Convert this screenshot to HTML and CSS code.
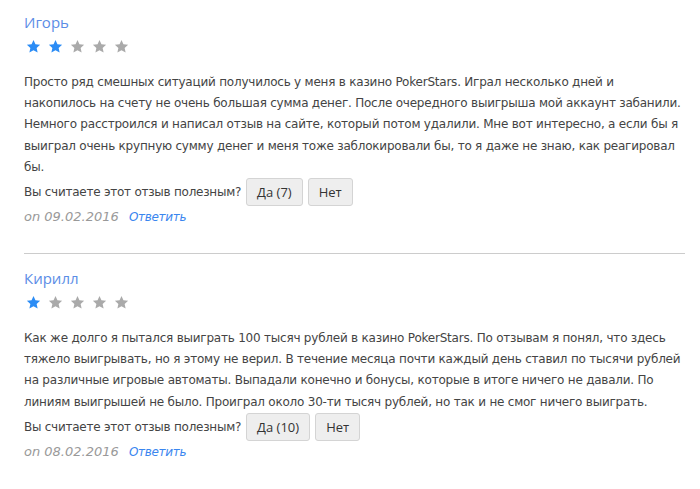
FILE: index.html
```html
<!DOCTYPE html>
<html lang="ru">
<head>
  <meta charset="UTF-8" />
  <title>Отзывы</title>
  <link rel="stylesheet" href="styles.css">
</head>
<body>
  <div class="reviews">

    <div class="review">
      <div class="review-name">Игорь</div>
      <div class="stars">
        <svg class="star on" viewBox="0 0 24 24"><polygon points="12,1.5 15.1,8.4 22.6,9.2 17,14.2 18.6,21.6 12,17.8 5.4,21.6 7,14.2 1.4,9.2 8.9,8.4"/></svg>
        <svg class="star on" viewBox="0 0 24 24"><polygon points="12,1.5 15.1,8.4 22.6,9.2 17,14.2 18.6,21.6 12,17.8 5.4,21.6 7,14.2 1.4,9.2 8.9,8.4"/></svg>
        <svg class="star" viewBox="0 0 24 24"><polygon points="12,1.5 15.1,8.4 22.6,9.2 17,14.2 18.6,21.6 12,17.8 5.4,21.6 7,14.2 1.4,9.2 8.9,8.4"/></svg>
        <svg class="star" viewBox="0 0 24 24"><polygon points="12,1.5 15.1,8.4 22.6,9.2 17,14.2 18.6,21.6 12,17.8 5.4,21.6 7,14.2 1.4,9.2 8.9,8.4"/></svg>
        <svg class="star" viewBox="0 0 24 24"><polygon points="12,1.5 15.1,8.4 22.6,9.2 17,14.2 18.6,21.6 12,17.8 5.4,21.6 7,14.2 1.4,9.2 8.9,8.4"/></svg>
      </div>
      <p class="review-text">Просто ряд смешных ситуаций получилось у меня в казино PokerStars. Играл несколько дней и накопилось на счету не очень большая сумма денег. После очередного выигрыша мой аккаунт забанили. Немного расстроился и написал отзыв на сайте, который потом удалили. Мне вот интересно, а если бы я выиграл очень крупную сумму денег и меня тоже заблокировали бы, то я даже не знаю, как реагировал бы.</p>
      <div class="helpful">
        <span>Вы считаете этот отзыв полезным?</span>
        <button type="button">Да (7)</button>
        <button type="button">Нет</button>
      </div>
      <div class="review-meta">on 09.02.2016 <a href="#">Ответить</a></div>
    </div>

    <div class="review">
      <div class="review-name">Кирилл</div>
      <div class="stars">
        <svg class="star on" viewBox="0 0 24 24"><polygon points="12,1.5 15.1,8.4 22.6,9.2 17,14.2 18.6,21.6 12,17.8 5.4,21.6 7,14.2 1.4,9.2 8.9,8.4"/></svg>
        <svg class="star" viewBox="0 0 24 24"><polygon points="12,1.5 15.1,8.4 22.6,9.2 17,14.2 18.6,21.6 12,17.8 5.4,21.6 7,14.2 1.4,9.2 8.9,8.4"/></svg>
        <svg class="star" viewBox="0 0 24 24"><polygon points="12,1.5 15.1,8.4 22.6,9.2 17,14.2 18.6,21.6 12,17.8 5.4,21.6 7,14.2 1.4,9.2 8.9,8.4"/></svg>
        <svg class="star" viewBox="0 0 24 24"><polygon points="12,1.5 15.1,8.4 22.6,9.2 17,14.2 18.6,21.6 12,17.8 5.4,21.6 7,14.2 1.4,9.2 8.9,8.4"/></svg>
        <svg class="star" viewBox="0 0 24 24"><polygon points="12,1.5 15.1,8.4 22.6,9.2 17,14.2 18.6,21.6 12,17.8 5.4,21.6 7,14.2 1.4,9.2 8.9,8.4"/></svg>
      </div>
      <p class="review-text">Как же долго я пытался выиграть 100 тысяч рублей в казино PokerStars. По отзывам я понял, что здесь тяжело выигрывать, но я этому не верил. В течение месяца почти каждый день ставил по тысячи рублей на различные игровые автоматы. Выпадали конечно и бонусы, которые в итоге ничего не давали. По линиям выигрышей не было. Проиграл около 30-ти тысяч рублей, но так и не смог ничего выиграть.</p>
      <div class="helpful">
        <span>Вы считаете этот отзыв полезным?</span>
        <button type="button">Да (10)</button>
        <button type="button">Нет</button>
      </div>
      <div class="review-meta">on 08.02.2016 <a href="#">Ответить</a></div>
    </div>

  </div>
</body>
</html>
```

FILE: styles.css
```css
body {
  margin: 0;
  background-color: #fff;
  font-family: "DejaVu Sans", Verdana, sans-serif;
  font-size: 12px;
  color: #444;
}

.reviews {
  padding: 12px 15px 0 24px;
}

.review {
  padding-bottom: 26px;
  margin-bottom: 14px;
  border-bottom: 1px solid #ccc;
}

.review:last-child {
  border-bottom: none;
}

.review-name {
  font-family: "Open Sans", Arial, sans-serif;
  font-size: 15px;
  line-height: 20px;
  color: #5b8de6;
}

.stars {
  display: flex;
  gap: 7px;
  margin-top: 7px;
  padding-left: 2px;
}

.star {
  width: 15px;
  height: 15px;
  fill: #aaa;
}

.star.on {
  fill: #2b8cf5;
}

.review-text {
  margin: 18px 0 0 0;
  line-height: 21.2px;
  letter-spacing: -0.22px;
}

.helpful {
  display: flex;
  align-items: center;
  gap: 5px;
  letter-spacing: -0.25px;
}

.helpful button {
  font-family: "Open Sans", Arial, sans-serif;
  font-size: 13px;
  letter-spacing: 0;
  color: #333;
  height: 28px;
  padding: 0 10px;
  background-color: #eee;
  border: 1px solid #d4d4d4;
  border-radius: 3px;
  cursor: pointer;
}

.review-meta {
  margin-top: 1px;
  line-height: 20px;
  font-size: 13px;
  font-style: italic;
  color: #999;
}

.review-meta a {
  margin-left: 6px;
  font-size: 12px;
  letter-spacing: -0.3px;
  color: #3a86ef;
  text-decoration: none;
}
```
